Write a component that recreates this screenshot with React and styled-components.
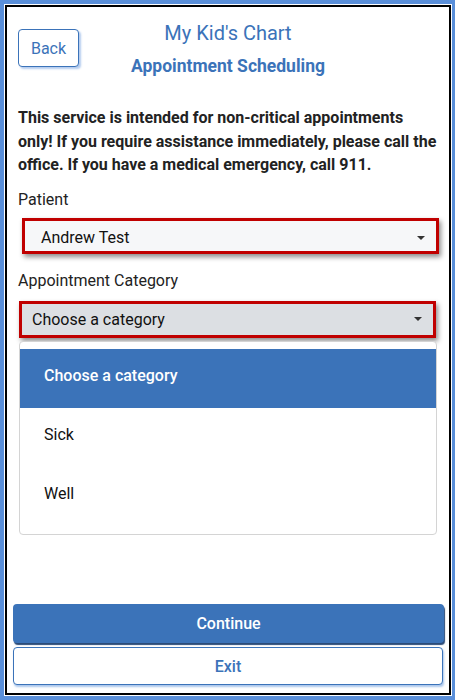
import React from "react";
import styled, { createGlobalStyle } from "styled-components";

const Global = createGlobalStyle`
  html, body { margin: 0; padding: 0; background: #fff; }
  body { font-family: Roboto, "Liberation Sans", Arial, sans-serif; }
  * { box-sizing: border-box; }
`;

const Frame = styled.div`
  width: 455px;
  height: 700px;
  border: 4px solid #5a8fd9;
  border-right-width: 3px;
  padding: 1px;
  background: #fff;
`;

const Inner = styled.div`
  height: 100%;
  border: 2px solid #000;
  display: flex;
  flex-direction: column;
`;

const Header = styled.header`
  display: grid;
  grid-template-columns: 1fr auto 1fr;
  align-items: start;
  padding: 14px 11px 0;
`;

const BackButton = styled.button`
  justify-self: start;
  margin-top: 8px;
  width: 61px;
  height: 38px;
  border: 1px solid #3b73b9;
  border-radius: 4px;
  background: #fff;
  color: #3b73b9;
  font: 400 16px Roboto, "Liberation Sans", sans-serif;
  box-shadow: 2px 2px 2px rgba(90, 143, 217, 0.45);
  padding: 0;
`;

const Titles = styled.div`
  display: flex;
  flex-direction: column;
  align-items: center;
`;

const Title = styled.h1`
  margin: 0;
  font-size: 20px;
  line-height: 24px;
  font-weight: 400;
  color: #3b73b9;
`;

const Subtitle = styled.h2`
  margin: 9px 0 0;
  font-size: 17.5px;
  line-height: 24px;
  font-weight: 700;
  color: #3b73b9;
`;

const Body = styled.main`
  padding: 28px 11px 0;
  display: flex;
  flex-direction: column;
  flex: 1;
`;

const Notice = styled.p`
  margin: 0;
  font-size: 16px;
  line-height: 23.5px;
  font-weight: 700;
  color: #222;
`;

const Label = styled.div`
  font-size: 16px;
  line-height: 20px;
  color: #222;
  margin-top: ${(p) => p.$top}px;
`;

const Select = styled.div`
  margin-top: ${(p) => p.$top}px;
  margin-left: ${(p) => p.$shift}px;
  width: 417px;
  height: ${(p) => p.$h}px;
  border: 3px solid #c00000;
  background: ${(p) => p.$bg};
  box-shadow: 2px 3px 5px rgba(0, 0, 0, 0.45);
  display: flex;
  align-items: center;
  justify-content: space-between;
  padding: ${(p) => p.$dy}px ${(p) => p.$right}px 0 ${(p) => p.$pad}px;
  font-size: 16px;
  color: #111;
`;

const Caret = styled.svg`
  width: 8px;
  height: 4px;
`;

const List = styled.ul`
  list-style: none;
  margin: 3px 0 0 1px;
  padding: 7px 0 8px;
  width: 418px;
  border: 1px solid #d4d4d4;
  border-radius: 4px;
  background: #fff;
`;

const Option = styled.li`
  height: 59px;
  padding: 17px 0 0 24px;
  font-size: 16px;
  line-height: 20px;
  font-weight: ${(p) => (p.$active ? 500 : 400)};
  background: ${(p) => (p.$active ? "#3b73b9" : "#fff")};
  color: ${(p) => (p.$active ? "#fff" : "#111")};
`;

const Footer = styled.footer`
  display: flex;
  flex-direction: column;
  gap: 4px;
  padding: 0 6px 8px;
`;

const PrimaryButton = styled.button`
  height: 39px;
  width: 431px;
  border: none;
  border-radius: 4px;
  background: #3b73b9;
  color: #fff;
  font: 500 16px Roboto, "Liberation Sans", sans-serif;
  box-shadow: 1px 2px 1px #2b4b78;
`;

const SecondaryButton = styled.button`
  height: 38px;
  width: 430px;
  border: 1px solid #3b73b9;
  border-radius: 4px;
  background: #fff;
  color: #3b73b9;
  font: 500 16px Roboto, "Liberation Sans", sans-serif;
  box-shadow: 1px 2px 2px rgba(90, 143, 217, 0.5);
`;

const CaretIcon = () => (
  <Caret viewBox="0 0 8 4">
    <path d="M0 0h8L4 4z" fill="#333" />
  </Caret>
);

export default function App() {
  return (
    <>
      <Global />
      <Frame>
        <Inner>
          <Header>
            <BackButton>Back</BackButton>
            <Titles>
              <Title>My Kid's Chart</Title>
              <Subtitle>Appointment Scheduling</Subtitle>
            </Titles>
            <div />
          </Header>
          <Body>
            <Notice>
              This service is intended for non-critical appointments only! If
              you require assistance immediately, please call the office. If
              you have a medical emergency, call 911.
            </Notice>
            <Label $top={13}>Patient</Label>
            <Select $top={8} $shift={4} $h={36} $bg="#f6f7f9" $pad={16} $right={11} $dy={4}>
              <span>Andrew Test</span>
              <CaretIcon />
            </Select>
            <Label $top={17}>Appointment Category</Label>
            <Select $top={10} $shift={1} $h={37} $bg="#dcdfe3" $pad={10} $right={11} $dy={0}>
              <span>Choose a category</span>
              <CaretIcon />
            </Select>
            <List>
              <Option $active>Choose a category</Option>
              <Option>Sick</Option>
              <Option>Well</Option>
            </List>
          </Body>
          <Footer>
            <PrimaryButton>Continue</PrimaryButton>
            <SecondaryButton>Exit</SecondaryButton>
          </Footer>
        </Inner>
      </Frame>
    </>
  );
}
